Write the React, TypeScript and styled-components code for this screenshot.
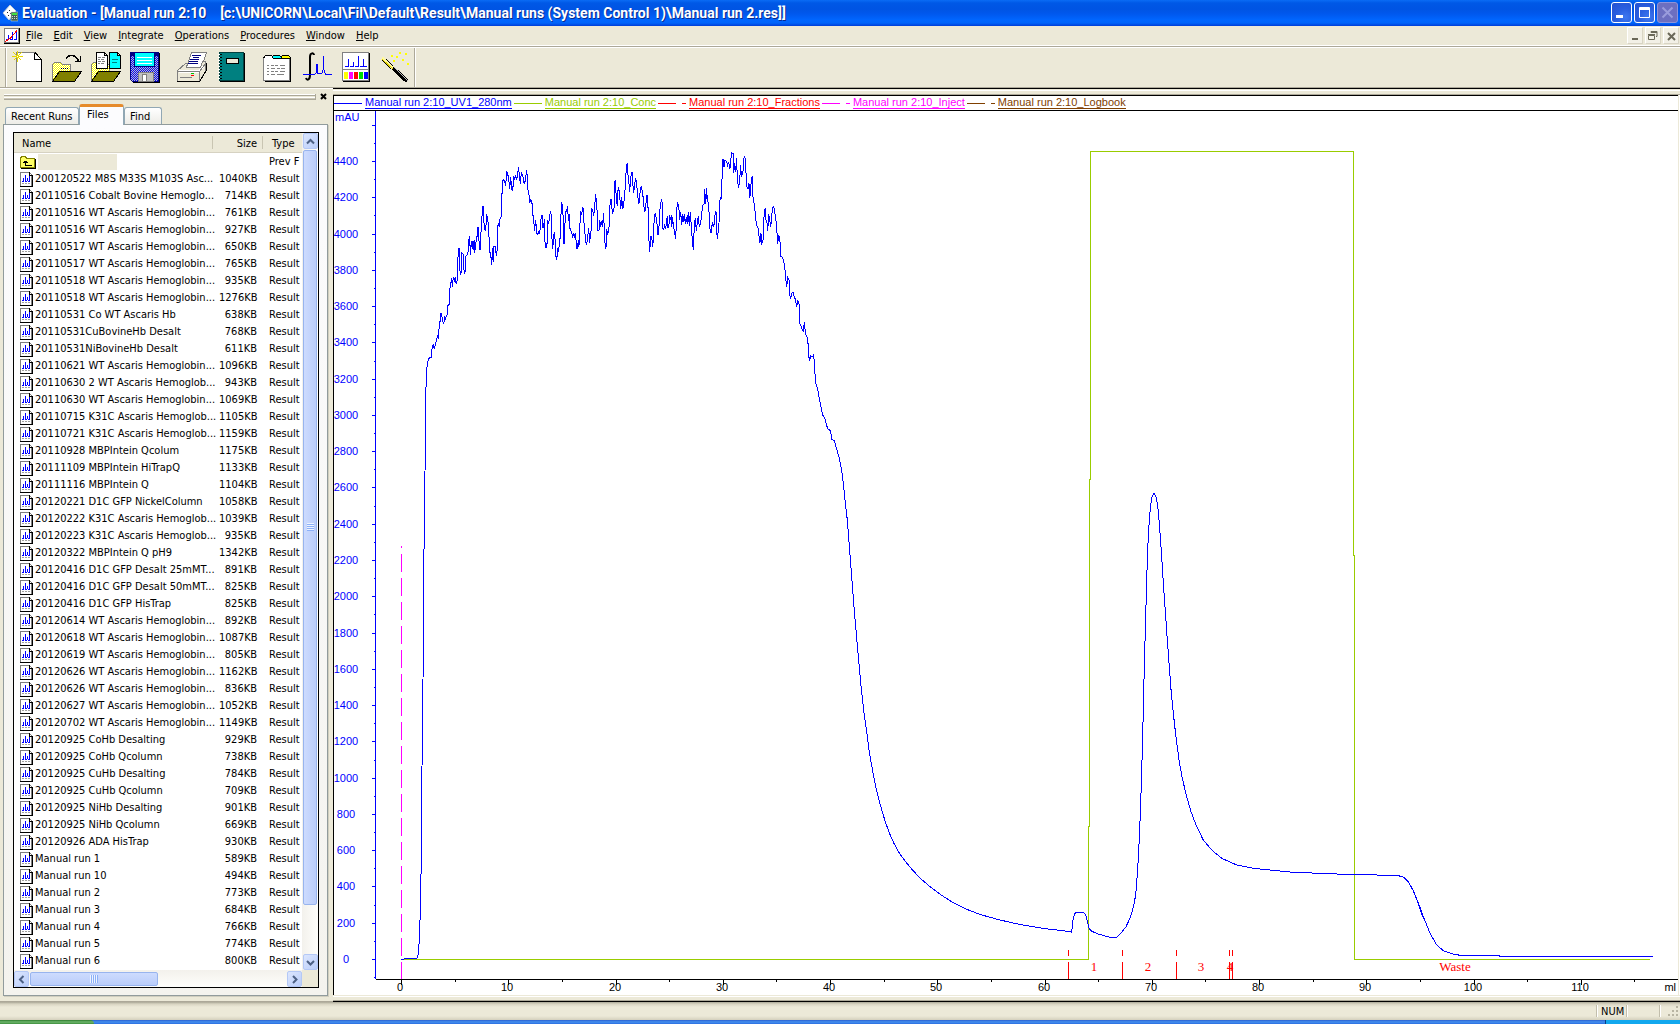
import React from "react";
import styled, { createGlobalStyle, css } from "styled-components";

const ui = '"DejaVu Sans Condensed", "Open Sans", sans-serif';
const plotFont = '"Liberation Sans", Arial, sans-serif';
const face = "#ece9d8";
const shade = "#aca899";
const blue = "#0000ff";
const lime = "#99cc00";

const GlobalStyle = createGlobalStyle`
  * { box-sizing: border-box; }
  body { margin: 0; background: ${face}; color: #000; font: 11px/16px ${ui}; }
  button { font: inherit; color: inherit; padding: 0; margin: 0; border: 0; background: none; }
  svg { display: block; flex: none; }
`;

const Page = styled.div`
  display: flex;
  flex-direction: column;
  min-height: 100vh;
  overflow: hidden;
`;

/* ---------- title bar ---------- */
const TitleBar = styled.header`
  display: flex;
  align-items: center;
  height: 26px;
  padding: 0 2px 1px;
  background: linear-gradient(#0a6cf5 0, #0058e6 3px, #0054e3 9px, #0058ee 14px, #0066ff 20px, #0064fa 23px, #003dd7 26px);
`;
const Title = styled.h1`
  flex: 1;
  min-width: 0;
  margin: 0 0 0 4px;
  overflow: hidden;
  color: #fff;
  font: bold 14px/20px Roboto, "Open Sans", sans-serif;
  white-space: pre;
  text-shadow: 1px 1px 0 #0a2a8c;
`;
const WindowButtons = styled.div`
  display: flex;
  gap: 2px;
`;
const WindowButton = styled.button<{ $off?: boolean }>`
  width: 21px;
  height: 21px;
  border: 1px solid ${(p) => (p.$off ? "#8f93d8" : "#fff")};
  border-radius: 3px;
  background: ${(p) =>
    p.$off ? "#6d6fc0" : "radial-gradient(circle at 70% 75%, #3e78f0, #2a5fe0 45%, #2450d0)"};
`;

/* ---------- menu bar ---------- */
const MenuBar = styled.nav`
  display: flex;
  align-items: center;
  height: 22px;
  padding: 0 1px 3px 4px;
  background: linear-gradient(to top, #fff 1px, ${shade} 1px, ${shade} 2px, #fff 2px, #fff 3px, ${face} 3px);
`;
const Menus = styled.div`
  display: flex;
  flex: 1;
`;
const MenuItem = styled.button`
  padding: 0 6px 0 5px;
  line-height: 18px;
  &::first-letter { text-decoration: underline; }
`;
const ChildButtons = styled.div`
  display: flex;
  gap: 2px;
`;
const ChildButton = styled.button`
  width: 16px;
  height: 17px;
  border: 1px solid #fff;
  border-right-color: #d8d4c4;
  border-bottom-color: #d8d4c4;
  background: #f2f0e6;
`;

/* ---------- tool bar ---------- */
const ToolBar = styled.div`
  display: flex;
  height: 40px;
  padding-left: 5px;
  border-bottom: 1px solid ${shade};
`;
const ToolBand = styled.div`
  display: flex;
  gap: 8px;
  padding-left: 2px;
  border-left: 1px solid ${shade};
  border-right: 1px solid ${shade};
  box-shadow: inset 1px 0 #fff, 1px 0 #fff;
`;
const ToolGroup = styled.div`
  display: flex;
`;
const ToolButton = styled.button`
  width: 39px;
  height: 38px;
  padding: 3px 3px 3px 4px;
`;

/* ---------- main area ---------- */
const Main = styled.main`
  display: flex;
  flex: 1;
`;
const Side = styled.aside`
  display: flex;
  flex: 0 0 333px;
  flex-direction: column;
  padding: 4px 5px 5px 3px;
  border-top: 1px solid #fff;
  border-bottom: 1px solid ${shade};
`;
const GripRow = styled.div`
  display: flex;
  align-items: center;
  gap: 4px;
  height: 7px;
  padding-left: 1px;
`;
const Grip = styled.div`
  flex: 1;
  height: 6px;
  border-right: 1px solid ${shade};
  background: linear-gradient(#fff 1px, ${shade} 1px, ${shade} 2px, ${face} 2px, ${face} 3px, #fff 3px, #fff 4px, ${face} 4px, ${shade} 5px);
`;
const CloseDock = styled.button`
  width: 8px;
  height: 7px;
`;
const Tabs = styled.div`
  display: flex;
  align-items: flex-end;
  height: 25px;
  margin-bottom: -1px;
  padding-left: 2px;
`;
const Tab = styled.button<{ $w: number; $on?: boolean }>`
  width: ${(p) => p.$w}px;
  height: 18px;
  padding: 0 0 0 5px;
  border: 1px solid #91a7b4;
  border-bottom: 0;
  border-radius: 3px 3px 0 0;
  background: linear-gradient(#fff, #ecebe6);
  line-height: 18px;
  text-align: left;
  white-space: nowrap;
  ${(p) =>
    p.$on &&
    css`
      z-index: 1;
      height: 21px;
      padding: 0 0 3px 7px;
      border-top: 3px solid #ffc73c;
      border-color: #e68b2c #91a7b4 #91a7b4;
      background: #fcfcfe;
      line-height: 15px;
    `}
`;
const Panel = styled.section`
  display: flex;
  flex: 1;
  flex-direction: column;
  padding: 7px 8px 7px 9px;
  border: 1px solid #919b9c;
  box-shadow: 1px 1px #d0cebf;
  background: linear-gradient(#fcfcfe, #f4f3ee);
`;
const FileList = styled.div`
  display: grid;
  flex: 1;
  grid-template-columns: minmax(0, 1fr) 16px;
  grid-template-rows: 1fr 17px;
  border: 1px solid #000;
  background: #fff;
`;
const TableClip = styled.div`
  overflow: hidden;
`;
const Table = styled.table`
  width: 100%;
  border-spacing: 0;
  table-layout: fixed;
  line-height: 16px;
  white-space: nowrap;
`;
const Head = styled.th<{ $w?: number; $end?: boolean; $pad: number }>`
  width: ${(p) => (p.$w ? `${p.$w}px` : "auto")};
  height: 20px;
  padding: 2px 6px 0 ${(p) => p.$pad}px;
  border-bottom: 1px solid #d6d2c2;
  background: linear-gradient(#c9c5b2, #c9c5b2) right 3px / 1px 13px no-repeat, ${face};
  font-weight: normal;
  text-align: ${(p) => (p.$end ? "right" : "left")};
  &:last-child { padding-right: 0; background: ${face}; }
`;
const Cell = styled.td<{ $end?: boolean }>`
  height: 17px;
  padding: 1px 6px 0;
  text-align: ${(p) => (p.$end ? "right" : "left")};
  &:first-child { padding-right: 0; }
  &:last-child { padding-right: 0; }
`;
const FileName = styled.span`
  display: flex;
  align-items: center;
  gap: 2px;
  height: 16px;
`;
const BlankName = styled.span`
  width: 79px;
  height: 16px;
  background: ${face};
`;
const Scroll = styled.div<{ $across?: boolean }>`
  display: flex;
  flex-direction: ${(p) => (p.$across ? "row" : "column")};
  padding: ${(p) => (p.$across ? "1px 0 0" : "0 0 0 1px")};
  background: linear-gradient(${(p) => (p.$across ? "180deg" : "90deg")}, #f3f1ec, #fefefb);
`;
const ScrollButton = styled.button`
  display: flex;
  flex: none;
  align-items: center;
  justify-content: center;
  width: 15px;
  height: 16px;
  border: 1px solid #b4c8f6;
  border-radius: 2px;
  background: linear-gradient(135deg, #dce6fe, #b9cdfa);
`;
const Track = styled.div<{ $across?: boolean }>`
  display: flex;
  flex: 1;
  flex-direction: ${(p) => (p.$across ? "row" : "column")};
  padding: 1px;
  padding-left: ${(p) => (p.$across ? 1 : 0)}px;
`;
const Thumb = styled.div<{ $across?: boolean }>`
  display: flex;
  flex: 0 0 ${(p) => (p.$across ? "50%" : "94%")};
  align-items: center;
  justify-content: center;
  border: 1px solid #98b4ee;
  border-radius: 2px;
  background: linear-gradient(${(p) => (p.$across ? "180deg" : "90deg")}, #cddbfe, #bacdfa);
`;
const Ridges = styled.div<{ $across?: boolean }>`
  width: ${(p) => (p.$across ? 8 : 7)}px;
  height: 8px;
  background: repeating-linear-gradient(${(p) => (p.$across ? "90deg" : "180deg")}, #eef4fe 0 1px, #8cb0f8 1px 2px);
`;
const Corner = styled.div`
  background: ${face};
`;

/* ---------- chromatogram ---------- */
const ChartPane = styled.section`
  display: flex;
  flex: 1;
  flex-direction: column;
  min-width: 0;
`;
const TopEdge = styled.div`
  height: 7px;
  background: linear-gradient(#000 1px, ${face} 1px, ${face} 2px, #fff 2px, #fff 3px, ${face} 3px, ${face} 6px, ${shade} 6px);
`;
const BottomEdge = styled.div`
  height: 7px;
  background: linear-gradient(${face} 1px, #fff 1px, #fff 2px, ${face} 2px, ${face} 5px, ${shade} 5px, ${shade} 6px, #000 6px);
`;
const ChartFrame = styled.div`
  flex: 1;
  margin-right: 2px;
  border-top: 1px solid #000;
  border-left: 1px solid #000;
  background: #fff;
  box-shadow: 1px 0 ${face}, 2px 0 #fff;
`;
const Legend = styled.ul`
  display: flex;
  gap: 2px;
  height: 15px;
  margin: 0;
  padding: 0;
  overflow: hidden;
  border-bottom: 1px solid #000;
  list-style: none;
`;
const LegendItem = styled.li<{ $c: string }>`
  display: flex;
  align-items: center;
  gap: 3px;
  color: ${(p) => p.$c};
  font: 11px/14px ${plotFont};
  white-space: pre;
`;
const Swatch = styled.span<{ $broken?: boolean }>`
  width: 28px;
  height: 1px;
  background: ${(p) =>
    p.$broken
      ? "linear-gradient(90deg, currentColor 18px, transparent 18px, transparent 24px, currentColor 24px)"
      : "currentColor"};
`;
const CurveName = styled.span`
  border-bottom: 1px solid;
  line-height: 11px;
`;
const Plot = styled.svg`
  width: 100%;
  height: auto;
`;
const AxisText = styled.text`
  font: 11px ${plotFont};
`;
const FractionText = styled.text`
  fill: #f00;
  font: 13px "Liberation Serif", "Times New Roman", serif;
  text-anchor: middle;
`;

/* ---------- status and task bars ---------- */
const StatusBar = styled.footer`
  display: flex;
  align-items: center;
  justify-content: flex-end;
  height: 18px;
  background: linear-gradient(#a9a695, #d8d4c2 2px, ${face} 5px, ${face} 14px, #d4d0bd);
`;
const StatusCell = styled.div<{ $w: number }>`
  width: ${(p) => p.$w}px;
  height: 12px;
  padding-left: 4px;
  border-left: 1px solid #c2beac;
  box-shadow: inset 1px 0 #fff;
  line-height: 14px;
`;
const TaskBar = styled.div`
  display: flex;
  justify-content: space-between;
  height: 4px;
  background: linear-gradient(#2a5fd0, #4490ee 2px, #2a6ce0);
`;
const StartEdge = styled.div`
  width: 94px;
  border-radius: 0 4px 0 0;
  background: linear-gradient(#2c7a2c, #6fb66c 2px, #3c8e3c);
`;
const TrayEdge = styled.div`
  width: 75px;
  border-left: 1px solid #0a3f86;
  background: #12a8ee;
`;

/* ---------- data ---------- */
const files: [string, number][] = [
  ["200120522 M8S M33S M103S Asc...", 1040],
  ["20110516 Cobalt Bovine Hemoglo...", 714],
  ["20110516 WT Ascaris Hemoglobin...", 761],
  ["20110516 WT Ascaris Hemoglobin...", 927],
  ["20110517 WT Ascaris Hemoglobin...", 650],
  ["20110517 WT Ascaris Hemoglobin...", 765],
  ["20110518 WT Ascaris Hemoglobin...", 935],
  ["20110518 WT Ascaris Hemoglobin...", 1276],
  ["20110531 Co WT Ascaris Hb", 638],
  ["20110531CuBovineHb Desalt", 768],
  ["20110531NiBovineHb Desalt", 611],
  ["20110621 WT Ascaris Hemoglobin...", 1096],
  ["20110630 2 WT Ascaris Hemoglob...", 943],
  ["20110630 WT Ascaris Hemoglobin...", 1069],
  ["20110715 K31C Ascaris Hemoglob...", 1105],
  ["20110721 K31C Ascaris Hemoglob...", 1159],
  ["20110928 MBPIntein Qcolum", 1175],
  ["20111109 MBPIntein HiTrapQ", 1133],
  ["20111116 MBPIntein Q", 1104],
  ["20120221 D1C GFP NickelColumn", 1058],
  ["20120222 K31C Ascaris Hemoglob...", 1039],
  ["20120223 K31C Ascaris Hemoglob...", 935],
  ["20120322 MBPIntein Q pH9", 1342],
  ["20120416 D1C GFP Desalt 25mMT...", 891],
  ["20120416 D1C GFP Desalt 50mMT...", 825],
  ["20120416 D1C GFP HisTrap", 825],
  ["20120614 WT Ascaris Hemoglobin...", 892],
  ["20120618 WT Ascaris Hemoglobin...", 1087],
  ["20120619 WT Ascaris Hemoglobin...", 805],
  ["20120626 WT Ascaris Hemoglobin...", 1162],
  ["20120626 WT Ascaris Hemoglobin...", 836],
  ["20120627 WT Ascaris Hemoglobin...", 1052],
  ["20120702 WT Ascaris Hemoglobin...", 1149],
  ["20120925 CoHb Desalting", 929],
  ["20120925 CoHb Qcolumn", 738],
  ["20120925 CuHb Desalting", 784],
  ["20120925 CuHb Qcolumn", 709],
  ["20120925 NiHb Desalting", 901],
  ["20120925 NiHb Qcolumn", 669],
  ["20120926 ADA HisTrap", 930],
  ["Manual run 1", 589],
  ["Manual run 10", 494],
  ["Manual run 2", 773],
  ["Manual run 3", 684],
  ["Manual run 4", 766],
  ["Manual run 5", 774],
  ["Manual run 6", 800],
];

const curves: [string, string, boolean][] = [
  ["Manual run 2:10_UV1_280nm", blue, false],
  ["Manual run 2:10_Conc", lime, false],
  ["Manual run 2:10_Fractions", "#ff0000", true],
  ["Manual run 2:10_Inject", "#ff00ff", true],
  ["Manual run 2:10_Logbook", "#804000", true],
];

/* Each segment of the UV trace is stored on its own finer grid. */
const segment = (x0: number, y0: number, scale: number, data: string) =>
  data
    .trim()
    .split(/\s+/)
    .map((pair) => {
      const [x, y] = pair.split(",").map(Number);
      return `${(x0 + x / scale).toFixed(1)},${(y0 + y / scale).toFixed(1)}`;
    })
    .join(" ");

const uvTrace = [
  segment(0, 0, 1, "401,960 404,959 417,958.5 418.7,953 419.3,936 420.3,914 420.7,896 421.3,854 422,767 423,680 424,550 425,472 425.7,420"),
  segment(360, 140, 3, `197,767 200,687 203,668 206,655 214,652 215,630 220,613 223,626 229,602 233,588 235,596 236,573 239,556
    242,520 244,527 245,520 247,540 251,553 254,528 256,541 259,526 262,525 263,497 268,492 269,450 272,430 275,415 277,442 280,411
    283,425 286,412 288,430 290,430 292,418 293,363 296,325 298,325 298,358 301,405 304,397 304,338 309,340 311,383 314,403 316,390
    317,350 322,344 325,333 326,303 329,289 331,345 334,303 337,327 339,303 341,330 343,300 344,340 347,311 350,290 353,288 353,262
    356,262 356,290 359,327 362,327 362,291 365,240 368,199 371,199 371,240 374,269 377,271 380,223 383,237 386,268 387,290 389,317
    389,335 392,343 395,374 398,325 400,367 402,319 406,319 407,325 409,349 412,325 412,273 415,250 418,260 419,240 422,231 425,230
    425,178 428,123 431,118 434,124 437,138 440,94 443,103 446,115 449,146 452,110 455,147 458,154 461,108 464,118 467,106 470,120
    473,104 475,82 478,100 481,133 484,99 488,104 491,128 494,130 497,113 500,91 502,112 503,149 506,152 509,190 512,176 515,190
    517,190 518,226 521,228 523,274 527,240 530,282 533,283 536,275 539,283 542,243 545,226 547,226 548,262 551,264 553,238 554,300
    557,322 560,322 562,300 563,240 566,253 569,226 572,214 574,230 575,283 578,328 581,284 584,276 587,346 590,360 593,328 596,333
    599,297 602,293 602,240 605,187 608,208 610,240 611,313 614,307 615,250 617,214 620,214 623,197 625,244 628,223 629,263 635,280
    638,290 641,278 644,295 647,278 649,320 652,328 655,300 656,322 659,297 660,250 662,214 665,222 668,203 671,207 672,250 674,254
    676,307 680,313 683,288 686,264 689,309 692,275 694,272 694,205 698,211 701,229 704,197 707,163 710,195 712,222 713,270 717,270
    719,240 722,260 725,242 728,262 730,220 733,262 734,300 737,326 740,312 740,266 743,285 746,270 749,240 750,195 753,176 755,200
    758,222 761,206 763,200 764,123 767,122 767,149 770,182 772,198 773,156 776,142 779,165 782,208 785,172 788,208 791,192 794,163
    797,120 799,82 802,70 803,100 806,120 809,155 811,130 814,99 817,98 818,130 821,160 824,133 827,115 830,135 833,165 836,193
    839,180 841,142 845,140 847,160 850,173 851,195 854,217 857,200 860,166 863,168 863,202 866,205 866,290 869,335 872,290 875,290
    878,320 880,298 881,262 884,222 887,221 889,240 892,257 893,286 896,279 898,240 899,208 902,204 902,190 905,178 908,200 908,265
    911,268 914,253 917,268 920,235 923,230 923,262 926,263 929,225 932,240 934,225 935,262 938,230 940,262 944,270 946,298 949,262
    950,207 953,190 956,195 959,240 962,215 965,255 968,222 970,246 973,222 976,253 979,230 982,253 985,215 988,258 991,215 994,258
    997,300 1000,331 1003,258 1006,235 1009,272 1012,250 1015,228 1018,262 1022,250 1025,220 1028,195 1033,192 1034,148 1037,192
    1040,145 1042,180 1046,190 1048,240 1051,277 1054,277 1057,245 1060,262 1063,250 1066,214 1068,214 1070,280 1073,296 1075,262
    1077,250 1078,200 1081,172 1084,175 1085,130 1088,87 1089,56 1092,80 1095,60 1100,64 1103,76 1106,66 1109,88 1112,72 1114,38
    1119,40 1121,100 1124,70 1127,95 1130,55 1132,120 1136,145 1139,118 1142,75 1144,112 1147,103 1150,90 1151,55 1154,50 1157,60
    1158,100 1161,140 1164,148 1167,130 1169,175 1172,152 1174,112 1177,110 1178,165 1181,183 1184,200 1187,238 1191,258 1194,264
    1197,288 1200,308 1203,280 1205,316 1207,303 1210,300 1211,238 1214,214 1216,203 1218,240 1221,250 1223,274 1226,222 1229,238
    1232,262 1235,226 1238,202 1241,200 1244,215 1247,235 1250,262 1253,312 1256,284 1259,300 1262,315 1263,350 1268,352 1272,370
    1275,390 1277,415 1280,440 1283,413 1288,422 1289,465 1292,478 1295,460 1299,455 1302,468 1306,478 1310,502 1313,480 1316,490
    1319,498 1319,550`),
  segment(0, 0, 1, `801.3,327 803.3,332 804.3,322.5 805.7,334.7 807.7,337.7 808.7,356 809.7,360.7 810.7,356 812.7,357 813.7,353.8
    814.7,370 815.7,383 817.7,389.7 820,402 822.7,415 825,419 827.7,429 830.3,430.5 832,439.6 834.3,440.5 837.3,451.3 839.3,458
    841.3,468 843.3,483 845.3,502.5 847.3,520 849.3,546 851.3,572 853.3,598 855.3,622 857.3,645.6 859.3,667 861.3,689 864,713
    866.7,732 869.3,752 872.7,771 876.7,791 881.7,810 885.7,823 890,834.5 894,843.5 899,852.5 905,861 912,869.5 921,879 931,887.5
    942,895.5 953,902.5 966,909 980,914.5 1000,920 1020,924.5 1044,928.5 1069,931.5`),
  segment(1020, 860, 3, `154,216 157,205 159,180 163,165 167,157 190,157 197,165 202,182 207,205 215,214 235,222 270,232 290,232
    305,217 318,200 330,175 340,142 347,105 350,70`),
  segment(1080, 480, 3, `175,1135 178,1075 181,1000 184,915 187,810 190,690 193,560 196,450 199,345 202,240 205,170 208,120 211,85
    216,50 222,40 228,50 233,75 238,130 243,200 247,260 252,340 257,410 262,480 268,560 274,640 281,710 289,780 298,845 307,895
    320,950 333,995 350,1040 370,1080 395,1110 425,1135 470,1155 520,1165 600,1173`),
  segment(1020, 860, 3, `820,37 875,39 950,42 1070,45 1135,47 1150,51 1165,65 1180,92 1195,130 1208,170`),
  segment(1380, 900, 3, "112,0 130,50 150,100 170,135 190,152 215,161 240,166 357,166 358,169 819,169"),
].join(" ");

const yOf = (mau: number) => Math.round(959 - mau * 0.18136) + 0.5;
const xOf = (ml: number) => Math.round(401 + ml * 10.725) + 0.5;
const yTicks = Array.from({ length: 48 }, (_, i) => -100 + i * 100);
const xTicks = Array.from({ length: 24 }, (_, i) => i * 5);
const fractions = [1068.5, 1122.5, 1176.5, 1229.5, 1232.5];
const fractionLabels: [string, number][] = [["1", 1094], ["2", 1148], ["3", 1201], ["4", 1230], ["Waste", 1455]];

const Chromatogram = () => (
  <Plot viewBox="334 111 1344 884" role="img" aria-label="Chromatogram">
    <g fill="none" shapeRendering="crispEdges" strokeWidth="1">
      <path stroke={lime} d="M401 959.5H1088.5V827L1089.5 826V480L1090.5 479V151.5H1353.5V555L1354.5 556V959.5H1650" />
      <path stroke="#ff00ff" strokeDasharray="18 6" strokeDashoffset="16" d="M401.5 546V979" />
      <polyline stroke={blue} points={uvTrace} />
      {fractions.map((x) => (
        <path key={x} stroke="#f00" d={`M${x} 950v6m0 6v17`} />
      ))}
      <path stroke={blue} d={`M375.5 111V979${yTicks.map((t) => (t % 200 ? `M374 ${yOf(t)}h1` : `M372 ${yOf(t)}h3`)).join("")}`} />
      <path stroke="#000" d={`M376 979.5H1678${xTicks.map((t) => `M${xOf(t)} 980v${t % 10 ? 2 : 5}`).join("")}`} />
    </g>
    <AxisText fill={blue} x="335" y="121">mAU</AxisText>
    {yTicks.filter((t) => t >= 0 && t < 4600 && t % 200 === 0).map((t) => (
      <AxisText key={t} fill={blue} x="346" y={yOf(t) + 3.5} textAnchor="middle">{t}</AxisText>
    ))}
    {xTicks.filter((t) => t % 10 === 0).map((t) => (
      <AxisText key={t} x={xOf(t) - 1.5} y="991" textAnchor="middle">{t}</AxisText>
    ))}
    <AxisText x="1676" y="991" textAnchor="end">ml</AxisText>
    {fractionLabels.map(([label, x]) => (
      <FractionText key={label} x={x} y="971">{label}</FractionText>
    ))}
  </Plot>
);

/* ---------- drawings ---------- */
const Icon32 = ({ children }: { children: React.ReactNode }) => (
  <svg width="32" height="32" viewBox="0 0 32 32" shapeRendering="crispEdges" fill="none">
    <defs>
      <pattern id="yellowDither" width="2" height="2" patternUnits="userSpaceOnUse">
        <path fill="#ffff00" d="M0 0h2v2H0z" />
        <path fill="#fff" d="M0 0h1v1H0zM1 1h1v1H1z" />
      </pattern>
      <pattern id="blueDither" width="2" height="2" patternUnits="userSpaceOnUse">
        <path fill="#0000ff" d="M0 0h2v2H0z" />
        <path fill="#c0c0c0" d="M0 0h1v1H0zM1 1h1v1H1z" />
      </pattern>
    </defs>
    {children}
  </svg>
);

const toolGroups: [string, React.ReactNode][][] = [
  [
    ["New", <>
      <path fill="#fff" d="M4 2h19l6 6v22H4z" />
      <path stroke="#808080" d="M4.5 30V1.5H23" />
      <path stroke="#000" d="M22.500 1.500v7h7M23 1.500l6.500 7M29.500 8v22.500H4" />
      <path stroke="#e8d800" d="M5.500 0v11M0 5.500h11M1.500 1.500l8 8M9.500 1.500l-8 8" />
      <path fill="#fff" d="M5 5h1v1H5z" />
    </>],
    ["Open", <>
      <path fill="url(#yellowDither)" stroke="#808080" d="M1.500 30.500v-17l2-2h6l2 2h8v7h-11z" />
      <path fill="#808000" stroke="#000" d="M8.500 20.500h22l-7 10h-22z" />
      <path stroke="#000" strokeDasharray="1 1" d="M10 17.500h8" />
      <path stroke="#000" d="M15 7.500c4-5 9-4 13 3M24 10.500h5.500V5" strokeWidth="1.500" />
    </>],
    ["Open copy", <>
      <path fill="url(#yellowDither)" stroke="#808080" d="M1.500 30.500v-17l2-2h6l2 2h8v7h-11z" />
      <path fill="#808000" stroke="#000" d="M8.500 20.500h22l-7 10h-22z" />
      <path fill="#fff" stroke="#000" d="M6.500 1.500h8l3 3v13h-11zM14.500 1.500v3h3" />
      <path stroke="#808080" d="M8 6.500h3m1 0h3M8 8.500h2m1 0h3M8 10.500h3m1 0h3M8 12.500h2m1 0h3" />
      <path fill="#00ffff" stroke="#000" d="M19.500 1.500h8l3 3v13h-11zM27.500 1.500v3h3" />
      <path stroke="#008080" d="M22 8.500h6M22 11.500h5" />
    </>],
    ["Save", <>
      <path fill="url(#blueDither)" stroke="#000080" d="M1.500 1.500h28v29h-26l-2-2z" />
      <path fill="#000080" d="M2 2h3v3H2zM26 2h3v3h-3z" />
      <path fill="#00ffff" stroke="#000080" d="M5.500 1.500h20v14h-20z" />
      <path stroke="#fff" d="M8 6.500h15M8 9.500h15M8 12.500h15" />
      <path fill="#c0c0c0" stroke="#808080" d="M9.500 21.500h15v9h-15z" />
      <path fill="#fff" stroke="#808080" d="M13.500 23.500h4v7h-4z" />
      <path stroke="#000" d="M30.500 2v29H4" />
    </>],
  ],
  [
    ["Print", <>
      <path fill="#fff" stroke="#808080" d="M15.500 1.500h15l-5 15h-15z" />
      <path stroke="#000080" d="M16 4.500h9M17 6.500h6M14 8.500h9M13 10.500h9M12 12.500h10" />
      <path fill="#ece9d8" stroke="#808080" d="M1.500 19.500l8-7h2l-1 4h14l2-6h3v10l-6 10h-22z" />
      <path fill="#fff" d="M3 19h20l5-6v3l-5 6H3z" />
      <path stroke="#808080" d="M2 20.500h21.500v10M24 20l6-8M4 26.500h12" />
      <path stroke="#000" d="M1 30.500h23M24 30l6-10v-8" />
      <path fill="#00c000" d="M15 22h3v1h-3z" />
      <path fill="#f00" d="M15 24h3v1h-3z" />
    </>],
    ["Journal", <>
      <path fill="#008080" stroke="#004040" d="M4.500 1.500h24v28h-24z" />
      <path stroke="#000" d="M29.500 2v28.500H5" />
      <path fill="#ece9d8" stroke="#000" d="M11.500 7.500h12v5h-12z" />
      <path stroke="#000" strokeDasharray="1 2" d="M5.500 3v27" strokeWidth="3" />
      <path stroke="#fff" strokeDasharray="1 2" d="M4 3v27" strokeWidth="2" />
    </>],
  ],
  [
    ["Properties", <>
      <path fill="#ffff00" stroke="#000" d="M19.500 8V5.500l1-1h6l2 2V10" />
      <path fill="#00ffff" stroke="#000" d="M10.500 8V5.500l1-1h6l2 2V8" />
      <path fill="#fff" stroke="#808080" d="M1.500 29.500v-23l2-2h6l2 3h16v22z" />
      <path stroke="#000" d="M1.500 7l2-2.500h6l2 3h16M28.500 8v22.500H3" />
      <path stroke="#808080" d="M5 14.500h2m2 0h3m1 0h3m2 0h5M5 17.500h2m2 0h4m2 0h3m1 0h4M5 20.500h2m2 0h3m1 0h3m2 0h5M5 23.500h2m2 0h4m2 0h7" />
    </>],
    ["Integrate", <>
      <path stroke="#000" strokeWidth="2" shapeRendering="auto" d="M13 4c0-2-4-3-4 2v18c0 5-3 6-4 3" />
      <path stroke={blue} d="M2 23.500h11l2-1 1-9v9h5l1.500-5V5v13l2 5.500h6" />
    </>],
    ["Peaks", <>
      <path fill="#fff" stroke="#808080" d="M2.500 1.500h26v17h-26z" />
      <path fill="#fff" stroke="#808080" d="M2.500 18.500h26v11h-26z" />
      <path stroke="#000" d="M29.500 2v28.500H3" />
      <path stroke={blue} d="M5 15.500h3M8.500 16V8M10 15.500h3M13.500 16v-5M15 15.500h3M18.500 16V5M20 15.500h3M23.500 16V8M24 15.500h3" />
      <path fill="#ffff00" d="M4 21h4v7H4z" />
      <path fill="#ff00ff" d="M9 21h4v7H9z" />
      <path fill="#f00" d="M14 21h4v7h-4z" />
      <path fill="#00e000" d="M19 21h4v7h-4z" />
      <path fill={blue} d="M24 21h4v7h-4z" />
    </>],
    ["Wizard", <>
      <path stroke="#000" strokeWidth="4" d="M3 7l25 23" />
      <path stroke="#c0c0c0" strokeWidth="1" d="M15 16l14 14" />
      <path stroke="#fff8a0" strokeWidth="3" d="M3 7l11 10" />
      <path stroke="#e0d000" strokeWidth="1" d="M3 8l11 10" />
      <path stroke="#ffff00" d="M12 5h2M20 2h2M17 6h2M26 3h2M23 9h2M28 13h2M14 10h2" strokeWidth="2" />
    </>],
  ],
];

const AppIcon = () => (
  <svg width="16" height="18" viewBox="0 0 16 18">
    <path fill="#fff" stroke="#b9c8dc" d="M1 9l7-8 6 6-7 9z" />
    <path fill="#222" d="M5 8h1v1H5zM7 6h1v1H7zM8 9h1v1H8zM6 11h1v1H6z" />
    <path fill="#3f5f57" stroke="#d5e4da" strokeWidth=".5" d="M9 8h7v9H9z" />
    <path fill="#43e043" d="M10 9h5v2h-5z" />
    <path fill="#cfd8d0" d="M10 12h1v1h-1zM12 12h1v1h-1zM14 12h1v1h-1zM10 14h1v1h-1zM12 14h1v1h-1zM14 14h1v1h-1z" />
  </svg>
);
const ChildIcon = () => (
  <svg width="17" height="16" viewBox="0 0 17 16" shapeRendering="crispEdges" fill="none">
    <path fill="#fff" stroke="#808080" d="M.5 .5h14v14H.5z" />
    <path stroke="#000" d="M15.500 0v15.500H0" />
    <path stroke={blue} d="M2 11.500h3M4.500 12V7M6 11.500h2M8.500 12V4M10 11.500h3M12.500 12V4" />
    <path stroke="#f00" d="M1 13.500l5-3 7-8" />
  </svg>
);
const RunIcon = () => (
  <svg width="13" height="15" viewBox="0 0 13 15" shapeRendering="crispEdges" fill="none">
    <path fill="#fff" stroke="#808080" d="M.5 14V.5h9l2 2V14z" />
    <path stroke="#000" d="M9.500 0v3H13M12.500 3v11.500H0" />
    <path fill={blue} d="M2 9h2v1H2zM3 6h1v3H3zM5 9h2v1H5zM5 3h1v6H5zM7 6h1v3H7zM8 9h2v1H8zM9 4h1v5H9z" />
    <path stroke="#a0a0a0" strokeDasharray="2 1" d="M2 11.500h8" />
  </svg>
);
const UpFolderIcon = () => (
  <svg width="16" height="13" viewBox="0 0 16 13" shapeRendering="crispEdges" fill="none">
    <path fill="#ffff66" stroke="#808000" d="M.5 11.500v-9l1-2h4l1 2h8v9z" />
    <path stroke="#000" d="M15.500 3v9.500H1M5.500 10V5M3 6.500h5M4 5.500h3M5 9.500h7" />
  </svg>
);
const Arrow = ({ d }: { d: string }) => (
  <svg width="9" height="9" viewBox="0 0 9 9" fill="none" stroke="#4d6185" strokeWidth="2">
    <path d={d} />
  </svg>
);
const Glyph = ({ d, color, size, width = 2 }: { d: string; color: string; size: number; width?: number }) => (
  <svg width={size} height={size} viewBox={`0 0 ${size} ${size}`} fill="none" stroke={color} strokeWidth={width}>
    <path d={d} />
  </svg>
);

const menus = ["File", "Edit", "View", "Integrate", "Operations", "Procedures", "Window", "Help"];

export default function App() {
  return (
    <Page>
      <GlobalStyle />
      <TitleBar>
        <AppIcon />
        <Title>{"Evaluation - [Manual run 2:10    [c:\\UNICORN\\Local\\Fil\\Default\\Result\\Manual runs (System Control 1)\\Manual run 2.res]]"}</Title>
        <WindowButtons>
          <WindowButton aria-label="Minimize"><Glyph size={19} color="#fff" width={3} d="M4 13.500h7" /></WindowButton>
          <WindowButton aria-label="Maximize"><Glyph size={19} color="#fff" width={1} d="M4.500 4.500h10v10h-10zM4 5.500h11M4 6.500h11" /></WindowButton>
          <WindowButton aria-label="Close" $off><Glyph size={19} color="#9a9cdc" d="M4.500 4.500l10 10M14.500 4.500l-10 10" /></WindowButton>
        </WindowButtons>
      </TitleBar>

      <MenuBar>
        <ChildIcon />
        <Menus>
          {menus.map((m) => (
            <MenuItem key={m}>{m}</MenuItem>
          ))}
        </Menus>
        <ChildButtons>
          <ChildButton aria-label="Minimize document"><Glyph size={14} color="#6a6858" d="M4 10h6" /></ChildButton>
          <ChildButton aria-label="Restore document"><Glyph size={14} color="#6a6858" width={1} d="M2.500 6.500h6v4h-6zM2 5.500h7M5 3.500V2.500h6v5h-1M5 3.500h6" /></ChildButton>
          <ChildButton aria-label="Close document"><Glyph size={14} color="#6a6858" d="M4 4l7 7M11 4l-7 7" /></ChildButton>
        </ChildButtons>
      </MenuBar>

      <ToolBar>
        <ToolBand>
          {toolGroups.map((group, i) => (
            <ToolGroup key={i}>
              {group.map(([label, art]) => (
                <ToolButton key={label} aria-label={label}>
                  <Icon32>{art}</Icon32>
                </ToolButton>
              ))}
            </ToolGroup>
          ))}
        </ToolBand>
      </ToolBar>

      <Main>
        <Side>
          <GripRow>
            <Grip />
            <CloseDock aria-label="Close panel"><Glyph size={7} color="#000" d="M1 1l5 5M6 1l-5 5" /></CloseDock>
          </GripRow>
          <Tabs role="tablist">
            <Tab role="tab" $w={74}>Recent Runs</Tab>
            <Tab role="tab" $w={45} $on aria-selected>Files</Tab>
            <Tab role="tab" $w={38}>Find</Tab>
          </Tabs>
          <Panel>
            <FileList>
              <TableClip>
                <Table>
                  <thead>
                    <tr>
                      <Head $w={199} $pad={8}>Name</Head>
                      <Head $w={50} $pad={6} $end>Size</Head>
                      <Head $pad={9}>Type</Head>
                    </tr>
                  </thead>
                  <tbody>
                    <tr>
                      <Cell><FileName><UpFolderIcon /><BlankName /></FileName></Cell>
                      <Cell />
                      <Cell>Prev F</Cell>
                    </tr>
                    {files.map(([name, size], i) => (
                      <tr key={i}>
                        <Cell><FileName><RunIcon />{name}</FileName></Cell>
                        <Cell $end>{size}KB</Cell>
                        <Cell>Result</Cell>
                      </tr>
                    ))}
                  </tbody>
                </Table>
              </TableClip>
              <Scroll>
                <ScrollButton aria-label="Scroll up"><Arrow d="M1 6.500l3.500-3.500L8 6.500" /></ScrollButton>
                <Track><Thumb><Ridges /></Thumb></Track>
                <ScrollButton aria-label="Scroll down"><Arrow d="M1 3l3.500 3.500L8 3" /></ScrollButton>
              </Scroll>
              <Scroll $across>
                <ScrollButton aria-label="Scroll left"><Arrow d="M6.500 1L3 4.500L6.500 8" /></ScrollButton>
                <Track $across><Thumb $across><Ridges $across /></Thumb></Track>
                <ScrollButton aria-label="Scroll right"><Arrow d="M3 1l3.500 3.500L3 8" /></ScrollButton>
              </Scroll>
              <Corner />
            </FileList>
          </Panel>
        </Side>

        <ChartPane>
          <TopEdge />
          <ChartFrame>
            <Legend>
              {curves.map(([name, color, broken]) => (
                <LegendItem key={name} $c={color}>
                  <Swatch $broken={broken} />
                  <CurveName>{name}</CurveName>
                </LegendItem>
              ))}
            </Legend>
            <Chromatogram />
          </ChartFrame>
          <BottomEdge />
        </ChartPane>
      </Main>

      <StatusBar>
        <StatusCell $w={30}>NUM</StatusCell>
        <StatusCell $w={33} />
        <StatusCell $w={7} />
        <svg width="14" height="14" viewBox="0 0 14 14" fill="#b8b4a2">
          <path d="M10 2h2v2h-2zM6 6h2v2H6zM10 6h2v2h-2zM2 10h2v2H2zM6 10h2v2H6zM10 10h2v2h-2z" />
        </svg>
      </StatusBar>
      <TaskBar>
        <StartEdge />
        <TrayEdge />
      </TaskBar>
    </Page>
  );
}
